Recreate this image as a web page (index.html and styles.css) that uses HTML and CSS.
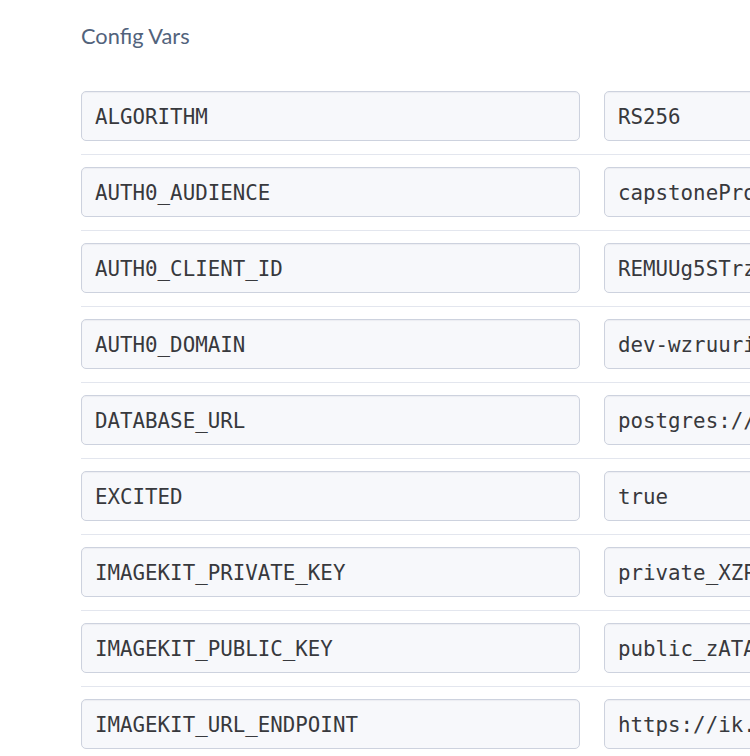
FILE: index.html
```html
<!DOCTYPE html>
<html>
<head>
<meta charset="utf-8">
<link rel="stylesheet" href="styles.css">
</head>
<body>
<div class="page">
  <h2 class="title">Config Vars</h2>
  <div class="vars">
    <div class="row"><div class="field key">ALGORITHM</div><div class="field val">RS256</div></div>
    <div class="row"><div class="field key">AUTH0_AUDIENCE</div><div class="field val">capstoneProject</div></div>
    <div class="row"><div class="field key">AUTH0_CLIENT_ID</div><div class="field val">REMUUg5STrzQx8Kp2LmNw</div></div>
    <div class="row"><div class="field key">AUTH0_DOMAIN</div><div class="field val">dev-wzruuri3.us.auth0.com</div></div>
    <div class="row"><div class="field key">DATABASE_URL</div><div class="field val">postgres://user:pass@host</div></div>
    <div class="row"><div class="field key">EXCITED</div><div class="field val">true</div></div>
    <div class="row"><div class="field key">IMAGEKIT_PRIVATE_KEY</div><div class="field val">private_XZP8kq2mYt</div></div>
    <div class="row"><div class="field key">IMAGEKIT_PUBLIC_KEY</div><div class="field val">public_zATA4n7wQe</div></div>
    <div class="row"><div class="field key">IMAGEKIT_URL_ENDPOINT</div><div class="field val">https://ik.imagekit.io/</div></div>
  </div>
</div>
</body>
</html>
```
FILE: styles.css
```css
html, body {
  margin: 0;
  padding: 0;
  background: #ffffff;
  overflow: hidden;
}
.page {
  padding: 0 0 0 81px;
  width: 1200px;
}
.title {
  margin: 0;
  padding-top: 22px;
  height: 79px;
  box-sizing: border-box;
  font-family: Lato, "Open Sans", sans-serif;
  font-weight: 400;
  font-size: 21.8px;
  line-height: 28px;
  color: #52637c;
}
.vars {
  display: flex;
  flex-direction: column;
}
.row {
  display: flex;
  gap: 24px;
  padding: 12px 0 13px 0;
  border-bottom: 1px solid #e3e6ee;
}
.field {
  box-sizing: border-box;
  height: 50px;
  width: 499px;
  border: 1px solid #cdd2de;
  border-radius: 5px;
  background: #f7f8fb;
  box-shadow: inset 0 1px 1px rgba(60, 70, 100, 0.06);
  padding: 2px 13px 0 13px;
  display: flex;
  align-items: center;
  font-family: "DejaVu Sans Mono", monospace;
  font-size: 20.8px;
  color: #38393d;
  white-space: nowrap;
  overflow: hidden;
}
.val {
  width: 520px;
}
```
